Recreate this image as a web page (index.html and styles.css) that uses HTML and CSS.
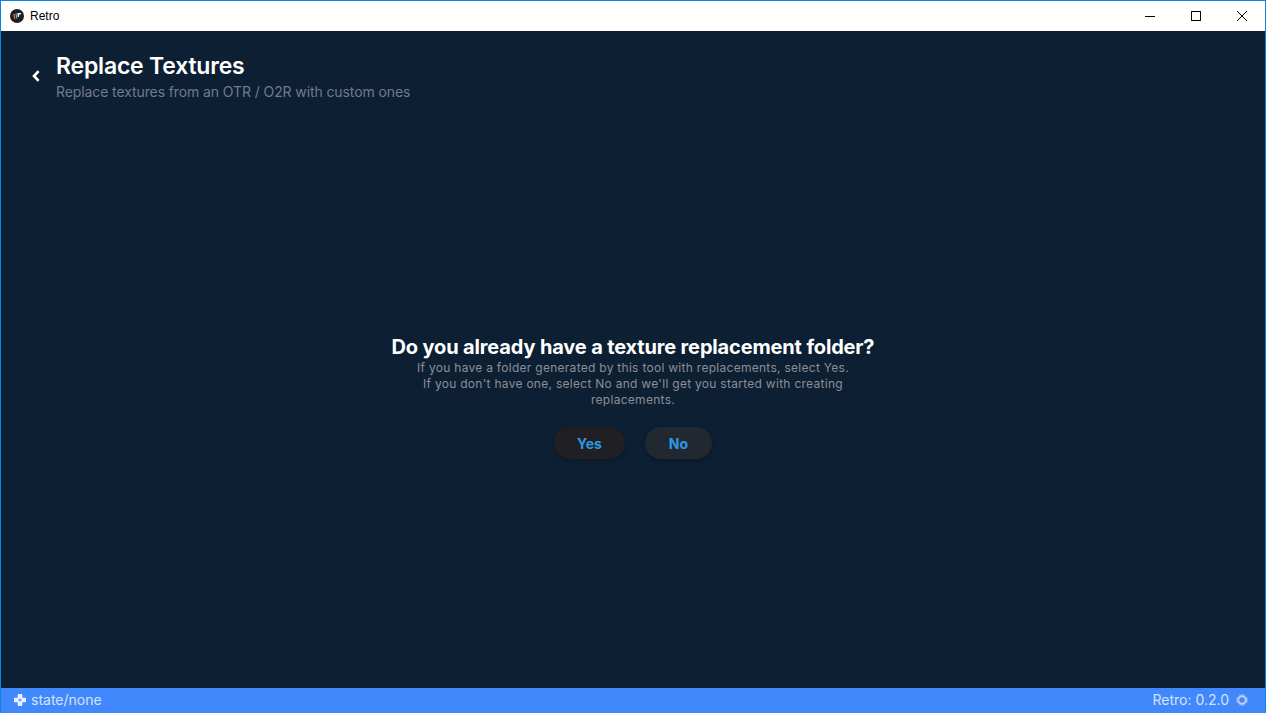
FILE: index.html
```html
<!DOCTYPE html>
<html lang="en">
<head>
<meta charset="utf-8">
<title>Retro</title>
<link rel="stylesheet" href="styles.css">
</head>
<body>
<div class="window">
  <header class="titlebar">
    <div class="app">
      <svg class="app-icon" viewBox="0 0 14 14" width="14" height="14">
        <circle cx="7" cy="7" r="7" fill="#1f1f1f"/>
        <path d="M3.2 5h1.3l.9 5H4.2z" fill="#e8743a"/>
        <path d="M5.4 4.6h1.3l.7 5H6.2z" fill="#5fb0d8"/>
        <path d="M7.4 4h3.8l-.4 1.6H9.2L8.9 8H7.8z" fill="#f2f2f2"/>
      </svg>
      <span class="app-name">Retro</span>
    </div>
    <div class="controls">
      <div class="control"><svg viewBox="0 0 10 10" width="10" height="10"><path d="M0 5.5h10" stroke="#000" stroke-width="1"/></svg></div>
      <div class="control"><svg viewBox="0 0 10 10" width="10" height="10"><rect x=".5" y=".5" width="9" height="9" fill="none" stroke="#000"/></svg></div>
      <div class="control"><svg viewBox="0 0 10 10" width="10" height="10"><path d="M0 0l10 10M10 0L0 10" stroke="#000" stroke-width="1"/></svg></div>
    </div>
  </header>
  <main class="content">
    <section class="head">
      <svg class="back" viewBox="0 0 10 14" width="10" height="14"><path d="M7.6 2.2 3 7l4.6 4.8" fill="none" stroke="#fff" stroke-width="2.6"/></svg>
      <div class="head-text">
        <h1 class="title">Replace Textures</h1>
        <p class="subtitle">Replace textures from an OTR / O2R with custom ones</p>
      </div>
    </section>
    <section class="center">
      <h2 class="question">Do you already have a texture replacement folder?</h2>
      <p class="desc">If you have a folder generated by this tool with replacements, select Yes.<br>If you don't have one, select No and we'll get you started with creating replacements.</p>
      <div class="actions">
        <button class="btn btn-yes">Yes</button>
        <button class="btn btn-no">No</button>
      </div>
    </section>
  </main>
  <footer class="statusbar">
    <div class="status-left">
      <svg class="status-icon" viewBox="0 0 12 12" width="12" height="12">
        <path d="M4.5 0h3A.8.8 0 0 1 8.300.8V3.700H11.200A.8.8 0 0 1 12 4.500v3A.8.8 0 0 1 11.200 8.300H8.300v2.900a.8.8 0 0 1-.8.8h-3a.8.8 0 0 1-.8-.8V8.300H.8A.8.8 0 0 1 0 7.500v-3A.8.8 0 0 1 .8 3.700H3.700V.8A.8.8 0 0 1 4.500 0z" fill="#eaf0ff"/>
        <circle cx="6" cy="6" r="1.6" fill="#6f9fff"/>
      </svg>
      <span>state/none</span>
    </div>
    <div class="status-right">
      <span>Retro: 0.2.0</span>
      <svg class="status-icon" viewBox="0 0 12 12" width="12" height="12">
        <circle cx="6" cy="6" r="3.800" fill="none" stroke="#bcd0f8" stroke-width="2"/>
        <path d="M3.500 .5h5v1.500h-5zM3.500 10h5v1.500h-5zM.5 3.500H2v5H.5zM10 3.500h1.500v5H10z" fill="#9dbbf8"/>
      </svg>
    </div>
  </footer>
</div>
</body>
</html>
```
FILE: styles.css
```css
* { box-sizing: border-box; }
html, body { margin: 0; height: 100%; }
body { font-family: "Inter", "Roboto", sans-serif; background: #0d1f33; }
.window {
  height: 713px; width: 1266px;
  display: flex; flex-direction: column;
  border: 1px solid #0a84e0; border-bottom: 0;
  background: #0d1f33;
  overflow: hidden;
}
.titlebar {
  height: 30px; flex: none; background: #fff;
  display: flex; justify-content: space-between; align-items: center;
}
.app { display: flex; align-items: center; gap: 6px; padding-left: 9px; }
.app-icon { display: block; }
.app-name { font: 12px "Liberation Sans", sans-serif; color: #000; }
.controls { display: flex; height: 100%; }
.control { width: 46px; display: flex; align-items: center; justify-content: center; }
.control svg { display: block; }
.content { flex: 1; display: flex; flex-direction: column; min-height: 0; }
.head { display: flex; align-items: flex-start; padding: 21px 0 0 30px; gap: 15px; }
.back { margin-top: 17px; display: block; }
.title { margin: 0; font-size: 23px; line-height: 29px; font-weight: 600; color: #fff; letter-spacing: -.2px; }
.subtitle { margin: 2px 0 0; font-size: 14px; line-height: 17px; color: #707b8c; letter-spacing: -.1px; }
.center {
  flex: 1; display: flex; flex-direction: column; align-items: center;
  padding-top: 234px;
}
.question { margin: 0; font-size: 20px; line-height: 26px; font-weight: 700; color: #fff; text-align: center; letter-spacing: -.15px; }
.desc { margin: 0; width: 470px; font-size: 12px; line-height: 16px; color: #8a8f98; text-align: center; letter-spacing: .28px; }
.actions { display: flex; gap: 20px; margin-top: 19px; }
.btn {
  height: 32px; border: 0; border-radius: 16px;
  font: 700 14px "Inter", sans-serif; color: #2b9ae4;
  box-shadow: 0 2px 4px rgba(0,0,0,.18);
}
.btn-yes { width: 71px; background: #1f1f24; }
.btn-no { width: 67px; background: #212830; }
.statusbar {
  height: 25px; flex: none; background: #4188fc; color: #d6e2fc;
  display: flex; justify-content: space-between; align-items: center;
  padding: 0 17px 2px 13px; font-size: 14px;
}
.status-left, .status-right { display: flex; align-items: center; gap: 5px; }
.status-right { gap: 7px; }
.status-icon { display: block; }
```
